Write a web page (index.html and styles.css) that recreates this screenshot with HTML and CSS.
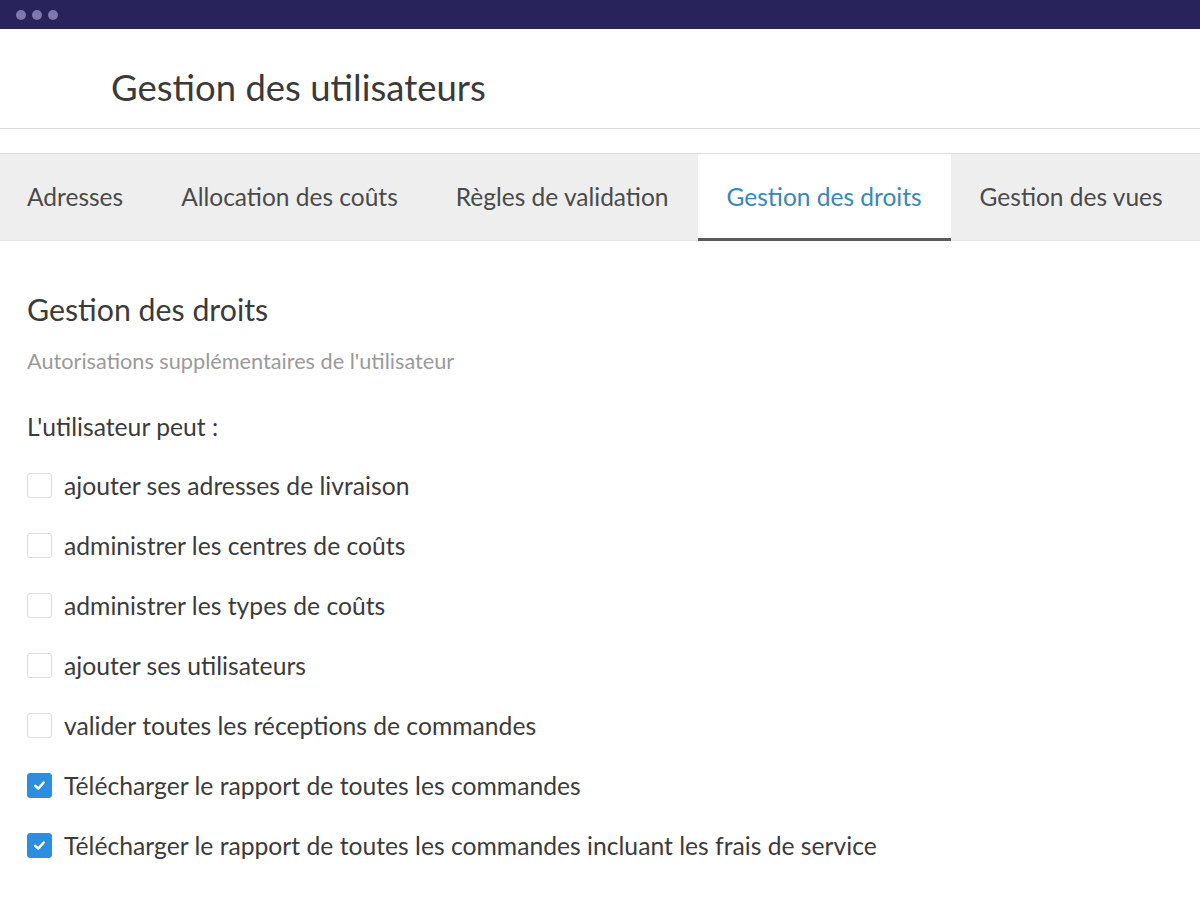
FILE: index.html
```html
<!DOCTYPE html>
<html lang="fr">
<head>
    <meta charset="UTF-8">
    <meta name="viewport" content="width=device-width, initial-scale=1.0">
    <link rel="stylesheet" href="styles.css">
</head>
<body>
    <div class="window-bar">
        <span class="dot"></span>
        <span class="dot"></span>
        <span class="dot"></span>
    </div>

    <header class="page-header">
        <h1>Gestion des utilisateurs</h1>
    </header>

    <nav class="tabs">
        <a class="tab">Adresses</a>
        <a class="tab">Allocation des coûts</a>
        <a class="tab">Règles de validation</a>
        <a class="tab active">Gestion des droits</a>
        <a class="tab">Gestion des vues</a>
    </nav>

    <main class="panel">
        <h2>Gestion des droits</h2>
        <p class="hint">Autorisations supplémentaires de l'utilisateur</p>
        <p class="lead">L'utilisateur peut :</p>

        <ul class="rights">
            <li><span class="box"></span>ajouter ses adresses de livraison</li>
            <li><span class="box"></span>administrer les centres de coûts</li>
            <li><span class="box"></span>administrer les types de coûts</li>
            <li><span class="box"></span>ajouter ses utilisateurs</li>
            <li><span class="box"></span>valider toutes les réceptions de commandes</li>
            <li>
                <span class="box checked">
                    <svg viewBox="0 0 12 12"><path d="M2.6 6.3 L5 8.5 L9.4 3.6"/></svg>
                </span>
                Télécharger le rapport de toutes les commandes
            </li>
            <li>
                <span class="box checked">
                    <svg viewBox="0 0 12 12"><path d="M2.6 6.3 L5 8.5 L9.4 3.6"/></svg>
                </span>
                Télécharger le rapport de toutes les commandes incluant les frais de service
            </li>
        </ul>
    </main>
</body>
</html>
```

FILE: styles.css
```css
:root {
    --navy: #29235c;
    --dot: #7d79ad;
    --text: #3b3b3b;
    --muted: #9a9a9a;
    --line: #dcdcdc;
    --tab-bg: #eeeeee;
    --accent: #3b86b8;
    --check: #2b8ee0;
}

* {
    margin: 0;
    padding: 0;
    box-sizing: border-box;
}

body {
    font-family: Lato, "Open Sans", sans-serif;
    background: #fff;
    color: var(--text);
}

.window-bar {
    height: 29px;
    background: var(--navy);
    display: flex;
    align-items: center;
    gap: 6px;
    padding-left: 16px;
}

.dot {
    width: 10px;
    height: 10px;
    border-radius: 50%;
    background: var(--dot);
}

.page-header {
    height: 100px;
    border-bottom: 1px solid var(--line);
    display: flex;
    align-items: center;
    padding: 16px 0 0 111px;
}

.page-header h1 {
    font-size: 36.5px;
    font-weight: 400;
    color: #3a3a3a;
}

.tabs {
    margin-top: 24px;
    height: 88px;
    background: var(--tab-bg);
    border-top: 1px solid var(--line);
    border-bottom: 1px solid #e2e2e2;
    display: flex;
}

.tab {
    display: flex;
    align-items: center;
    padding: 0 29px;
    font-size: 24.5px;
    color: #4a4a4a;
    border-bottom: 3px solid transparent;
    margin-bottom: -1px;
}

.tab:first-child {
    padding-left: 27px;
}

.tab.active {
    background: #fff;
    color: var(--accent);
    border-bottom-color: #5a5a5a;
}

.panel {
    padding: 50px 27px 0;
}

.panel h2 {
    font-size: 30.3px;
    font-weight: 400;
    color: #3a3a3a;
}

.hint {
    margin-top: 21px;
    font-size: 21.7px;
    color: var(--muted);
}

.lead {
    margin-top: 38px;
    font-size: 24.7px;
}

.rights {
    list-style: none;
    margin-top: 14px;
}

.rights li {
    height: 60px;
    display: flex;
    align-items: center;
    gap: 12px;
    font-size: 24.7px;
}

.box {
    width: 25px;
    height: 25px;
    border: 1px solid var(--line);
    border-radius: 3px;
    flex-shrink: 0;
    display: grid;
    place-items: center;
}

.box.checked {
    background: var(--check);
    border-color: var(--check);
}

.box svg {
    width: 15px;
    height: 15px;
    fill: none;
    stroke: #fff;
    stroke-width: 2;
    stroke-linecap: round;
    stroke-linejoin: round;
}
```
